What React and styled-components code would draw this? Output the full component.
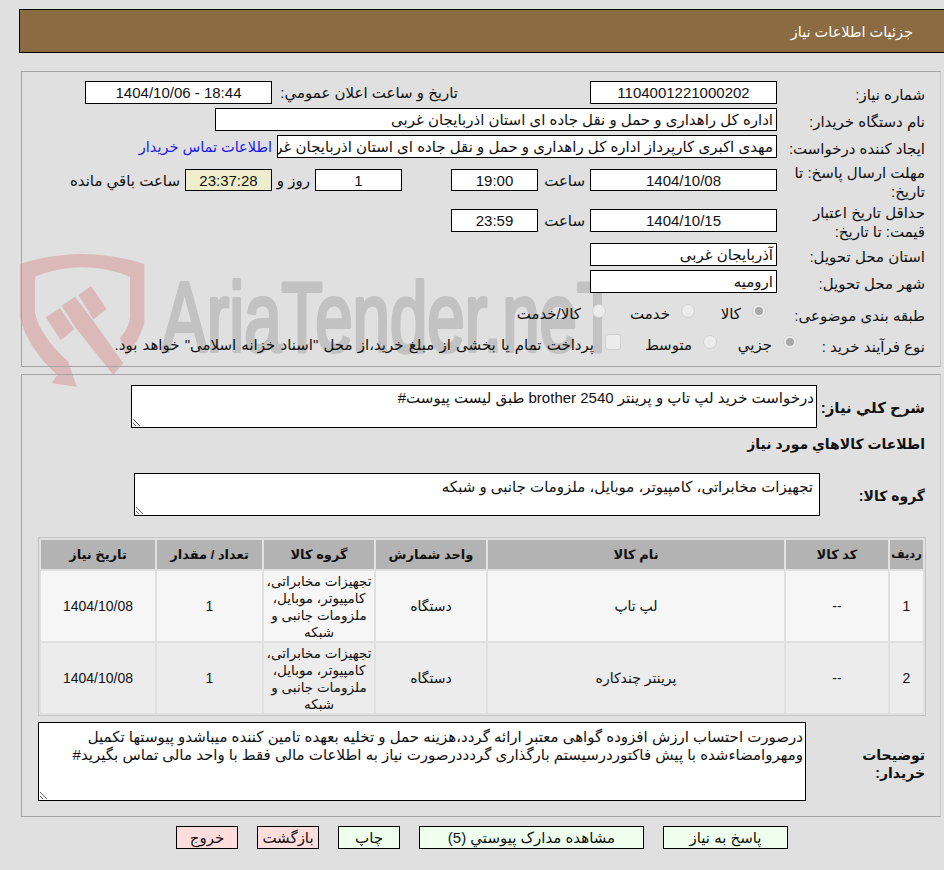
import React from "react";
import styled, { createGlobalStyle } from "styled-components";

const FONT = `"Liberation Sans", "DejaVu Sans", sans-serif`;

const Global = createGlobalStyle`
  html, body { margin: 0; padding: 0; background: #e0e0e0; overflow: hidden; }
  body { font: 15px/19px ${FONT}; color: #111; }
`;

const Page = styled.div`
  position: relative;
  width: 944px;
  height: 870px;
  overflow: hidden;
  direction: rtl;
`;
const Watermark = styled.svg`
  position: absolute;
  left: 20px;
  top: 248px;
  pointer-events: none;
`;
const Content = styled.div`
  position: relative;
  padding-top: 9px;
`;
const TitleBar = styled.div`
  height: 42px;
  margin-left: 19px;
  padding-right: 31px;
  border: 1px solid #000;
  border-right: 0;
  background: #8b6b42;
  color: #fff;
  font-size: 14.5px;
  line-height: 45px;
`;
const Panel = styled.section`
  margin: ${(p) => p.$top}px 3px 0 21px;
  height: ${(p) => p.$height}px;
  padding: ${(p) => p.$pad}px 15px 0 14px;
  border: 1px solid #a4a4a4;
  border-right-color: #c4c4c4;
  box-sizing: border-box;
`;
const Row = styled.div`
  display: flex;
  align-items: center;
  height: ${(p) => p.$h || 23}px;
  margin-bottom: ${(p) => p.$mb ?? 4}px;
  margin-top: ${(p) => p.$mt || 0}px;
`;
const Label = styled.div`
  flex: none;
  width: ${(p) => p.$w || 148}px;
  padding: 3px 0 0 3px;
  box-sizing: border-box;
`;
const Field = styled.div`
  flex: none;
  width: ${(p) => p.$w}px;
  height: ${(p) => p.$h || 23}px;
  box-sizing: border-box;
  border: 1px solid #000;
  background: ${(p) => (p.$alt ? "#eeeecc" : "#fff")};
  line-height: ${(p) => (p.$h || 23) - 1}px;
  padding: 0 3px;
  text-align: ${(p) => (p.$center ? "center" : "right")};
  white-space: nowrap;
  overflow: hidden;
`;
const Note = styled.span`
  flex: none;
  width: ${(p) => p.$w}px;
  margin-right: ${(p) => p.$mr ?? 5}px;
  white-space: nowrap;
  text-align: right;
`;
const Link = styled.a`
  flex: none;
  margin-right: 5px;
  padding-top: 2px;
  color: #1a1aee;
  font-size: 14.5px;
  white-space: nowrap;
`;
const Choice = styled.span`
  display: flex;
  flex: none;
  align-items: center;
  gap: 11px;
  width: ${(p) => p.$w}px;
  word-spacing: ${(p) => p.$ws || 0}px;
  white-space: nowrap;
`;
const Radio = styled.span`
  flex: none;
  position: relative;
  width: 14px;
  height: 14px;
  margin-top: -6px;
  border-radius: 50%;
  border: 1px solid #d2d2d2;
  box-sizing: border-box;
  background: #ececec;
  &::after {
    content: "";
    display: ${(p) => (p.$on ? "block" : "none")};
    position: absolute;
    inset: 2px;
    border-radius: 50%;
    background: #a8a8a8;
  }
`;
const Check = styled.span`
  flex: none;
  width: 16px;
  height: 16px;
  margin-top: -6px;
  border-radius: 3px;
  border: 1px solid #d0d0d0;
  box-sizing: border-box;
  background: #ececec;
`;
const BoldLabel = styled.div`
  flex: none;
  width: ${(p) => p.$w || 108}px;
  padding: ${(p) => p.$pt || 0}px 0 0 ${(p) => p.$pl || 0}px;
  box-sizing: border-box;
  font-weight: 700;
  font-size: ${(p) => p.$fs || 14}px;
  line-height: 18px;
`;
const TextBox = styled.textarea`
  flex: none;
  display: block;
  width: ${(p) => p.$w}px;
  height: ${(p) => p.$h}px;
  margin: 0;
  padding: ${(p) => p.$pt}px ${(p) => p.$pr}px 0 3px;
  box-sizing: border-box;
  border: 1px solid #000;
  border-radius: 0;
  outline: 0;
  background: #fff;
  color: #111;
  font: 15px/18px ${FONT};
  direction: rtl;
`;
const Heading = styled.h3`
  margin: 7px 0 18px;
  height: 20px;
  font-size: 14px;
  line-height: 18px;
  font-weight: 700;
`;
const Goods = styled.table`
  width: 888px;
  margin: 21px -1px 0 0;
  table-layout: fixed;
  border-collapse: separate;
  border-spacing: 2px;
  border: 1px solid #c4c4c4;
  text-align: center;
  th {
    height: 29px;
    padding: 0;
    background: #b3b3b3;
    font-size: 13px;
    font-weight: 700;
    white-space: nowrap;
  }
  th:first-child { font-size: 11.5px; }
  td {
    height: 70px;
    padding: 1px 0 0;
    box-sizing: border-box;
    font-size: 14px;
    line-height: 17px;
  }
  td.group { font-size: 13.5px; }
`;
const Tr = styled.tr`
  background: ${(p) => p.$bg};
`;
const Actions = styled.div`
  display: flex;
  gap: 19px;
  margin: 9px 156px 0 0;
`;
const Action = styled.button`
  flex: none;
  width: ${(p) => p.$w}px;
  height: 23px;
  padding: 0;
  border: 1px solid #000;
  border-radius: 0;
  background: ${(p) => (p.$danger ? "#ffdddd" : "#eeffee")};
  color: #111;
  font: 15px ${FONT};
`;

const rows = [
  { id: 1, name: "لپ تاپ", bg: "#f6f6f6" },
  { id: 2, name: "پرينتر چندکاره", bg: "#ececec" },
];
const widths = [33, 102, 296, 110, 110, 105, 114];
const heads = ["رديف", "کد کالا", "نام کالا", "واحد شمارش", "گروه کالا", "تعداد / مقدار", "تاريخ نياز"];
const group = "تجهيزات مخابراتی، کامپيوتر، موبايل، ملزومات جانبی و شبکه";

export default function App() {
  return (
    <Page>
      <Global />
      <Watermark width="610" height="145" viewBox="0 0 610 145">
        <g fill="#dcb9b9">
          <path d="M0 16 Q62 -4 124.3 16 L124.3 75 Q120 92 106 108 L100 90 Q110 78 110 68.7 L110 28.7 Q62 10 15 28.7 L15 65 Q20 88 48.3 113.7 L56.7 138.7 L31.7 135.3 L37 127 Q8 100 0 70 Z" />
          <path d="M25.7 69.3 L40 60.3 L54.3 81.3 L40.7 92 Z" />
          <path d="M41.7 57.7 L55 48.7 L72.7 72 L103.3 115.3 L93.3 127 L55.3 79.3 Z" />
          <path d="M58.3 47 L71 38 L86.7 61.3 L73.3 71.3 Z" />
        </g>
        <text
          direction="ltr"
          x="142"
          y="103"
          fontSize="98"
          textLength="456"
          lengthAdjust="spacingAndGlyphs"
          fill="#c2c2c2"
          stroke="#c2c2c2"
          strokeWidth="4"
          strokeLinejoin="round"
          fontFamily="Liberation Sans, sans-serif"
        >
          AriaTender.neT
        </text>
      </Watermark>
      <Content>
        <TitleBar>جزئيات اطلاعات نياز</TitleBar>
        <Panel $top={18} $height={296} $pad={9}>
          <Row>
            <Label>شماره نياز:</Label>
            <Field $w={187} $center>1104001221000202</Field>
            <Note $w={186} $mr={132}>تاريخ و ساعت اعلان عمومي:</Note>
            <Field $w={187} $center>18:44 - 1404/10/06</Field>
          </Row>
          <Row>
            <Label>نام دستگاه خريدار:</Label>
            <Field $w={562}>اداره کل راهداری و حمل و نقل جاده ای استان اذربایجان غربی</Field>
          </Row>
          <Row $mb={5}>
            <Label>ايجاد کننده درخواست:</Label>
            <Field $w={500}>مهدی اکبری کارپرداز اداره کل راهداری و حمل و نقل جاده ای استان اذربایجان غربی</Field>
            <Link>اطلاعات تماس خريدار</Link>
          </Row>
          <Row $h={34} $mb={6}>
            <Label>مهلت ارسال پاسخ: تا تاريخ:</Label>
            <Field $w={187} $h={22} $center>1404/10/08</Field>
            <Note $w={47}>ساعت</Note>
            <Field $w={87} $h={22} $center>19:00</Field>
            <Note $w={49} $mr={0} />
            <Field $w={87} $h={22} $center>1</Field>
            <Note $w={38}>روز و</Note>
            <Field $w={87} $h={22} $center $alt>23:37:28</Field>
            <Note $w={112}>ساعت باقي مانده</Note>
          </Row>
          <Row $h={34} $mb={6}>
            <Label>حداقل تاريخ اعتبار قيمت: تا تاريخ:</Label>
            <Field $w={187} $center>1404/10/15</Field>
            <Note $w={47}>ساعت</Note>
            <Field $w={87} $center>23:59</Field>
          </Row>
          <Row>
            <Label>استان محل تحويل:</Label>
            <Field $w={187}>آذربایجان غربی</Field>
          </Row>
          <Row $mb={9}>
            <Label>شهر محل تحويل:</Label>
            <Field $w={187}>اروميه</Field>
          </Row>
          <Row $mb={8}>
            <Label $w={159}>طبقه بندی موضوعی:</Label>
            <Choice $w={71}><Radio $on />کالا</Choice>
            <Choice $w={89}><Radio />خدمت</Choice>
            <Choice $w={100}><Radio />کالا/خدمت</Choice>
          </Row>
          <Row>
            <Label $w={128}>نوع فرآيند خريد :</Label>
            <Choice $w={80}><Radio $on />جزيي</Choice>
            <Choice $w={96}><Radio />متوسط</Choice>
            <Choice $w={510} $ws={1}><Check />پرداخت تمام یا بخشی از مبلغ خرید،از محل "اسناد خزانه اسلامی" خواهد بود.</Choice>
          </Row>
        </Panel>
        <Panel $top={7} $height={443} $pad={10}>
          <Row $h={43} $mb={0}>
            <BoldLabel $fs={15} $pt={2}>شرح كلي نياز:</BoldLabel>
            <TextBox $w={686} $h={43} $pt={3} $pr={2} readOnly defaultValue="درخواست خرید لپ تاپ و پرینتر brother 2540 طبق لیست پیوست#" />
          </Row>
          <Heading>اطلاعات كالاهاي مورد نياز</Heading>
          <Row $h={43} $mb={0}>
            <BoldLabel $w={105} $pt={2}>گروه كالا:</BoldLabel>
            <TextBox $w={686} $h={43} $pt={4} $pr={6} readOnly defaultValue="تجهيزات مخابراتی، کامپیوتر، موبایل، ملزومات جانبی و شبکه" />
          </Row>
          <Goods>
            <colgroup>
              {widths.map((w, i) => <col key={i} style={{ width: w }} />)}
            </colgroup>
            <thead>
              <tr>{heads.map((h) => <th key={h}>{h}</th>)}</tr>
            </thead>
            <tbody>
              {rows.map((r) => (
                <Tr key={r.id} $bg={r.bg}>
                  <td>{r.id}</td>
                  <td>--</td>
                  <td>{r.name}</td>
                  <td>دستگاه</td>
                  <td className="group">{group}</td>
                  <td>1</td>
                  <td>1404/10/08</td>
                </Tr>
              ))}
            </tbody>
          </Goods>
          <Row $h={79} $mb={0} $mt={6}>
            <BoldLabel $w={119} $pt={4} $pl={40}>توضيحات خريدار:</BoldLabel>
            <TextBox $w={768} $h={79} $pt={5} $pr={2} readOnly defaultValue="درصورت احتساب ارزش افزوده گواهی معتبر ارائه گردد،هزینه حمل و تخلیه بعهده تامین کننده میباشدو پیوستها تکمیل ومهروامضاءشده با پیش فاکتوردرسیستم بارگذاری گردددرصورت نیاز به اطلاعات مالی فقط با واحد مالی تماس بگیرید#" />
          </Row>
        </Panel>
        <Actions>
          <Action $w={125}>پاسخ به نياز</Action>
          <Action $w={225}>مشاهده مدارک پيوستي (5)</Action>
          <Action $w={62}>چاپ</Action>
          <Action $w={62} $danger>بازگشت</Action>
          <Action $w={62} $danger>خروج</Action>
        </Actions>
      </Content>
    </Page>
  );
}
